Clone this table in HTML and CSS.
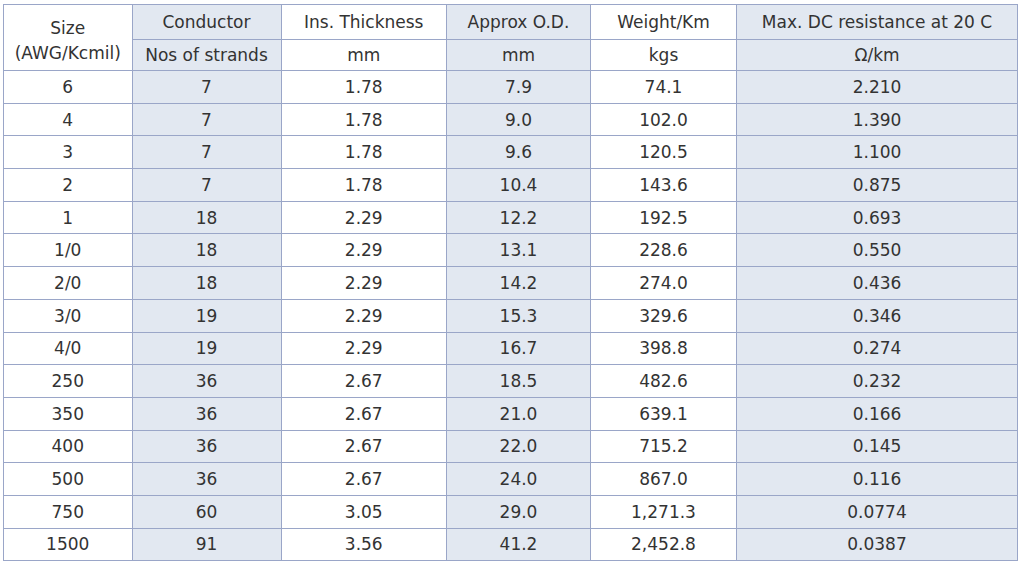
FILE: index.html
```html
<!DOCTYPE html>
<html>
<head>
<meta charset="utf-8">
<link rel="stylesheet" href="styles.css">
</head>
<body>
<table class="spec">
  <colgroup>
    <col class="c1"><col class="c2"><col class="c3"><col class="c4"><col class="c5"><col class="c6">
  </colgroup>
  <thead>
    <tr class="h1">
      <th rowspan="2" class="size">Size<br>(AWG/Kcmil)</th>
      <th class="alt">Conductor</th>
      <th>Ins. Thickness</th>
      <th class="alt">Approx O.D.</th>
      <th>Weight/Km</th>
      <th class="alt">Max. DC resistance at 20 C</th>
    </tr>
    <tr class="h2">
      <th class="alt">Nos of strands</th>
      <th>mm</th>
      <th class="alt">mm</th>
      <th>kgs</th>
      <th class="alt">Ω/km</th>
    </tr>
  </thead>
  <tbody>
    <tr><td>6</td><td class="alt">7</td><td>1.78</td><td class="alt">7.9</td><td>74.1</td><td class="alt">2.210</td></tr>
    <tr><td>4</td><td class="alt">7</td><td>1.78</td><td class="alt">9.0</td><td>102.0</td><td class="alt">1.390</td></tr>
    <tr><td>3</td><td class="alt">7</td><td>1.78</td><td class="alt">9.6</td><td>120.5</td><td class="alt">1.100</td></tr>
    <tr><td>2</td><td class="alt">7</td><td>1.78</td><td class="alt">10.4</td><td>143.6</td><td class="alt">0.875</td></tr>
    <tr><td>1</td><td class="alt">18</td><td>2.29</td><td class="alt">12.2</td><td>192.5</td><td class="alt">0.693</td></tr>
    <tr><td>1/0</td><td class="alt">18</td><td>2.29</td><td class="alt">13.1</td><td>228.6</td><td class="alt">0.550</td></tr>
    <tr><td>2/0</td><td class="alt">18</td><td>2.29</td><td class="alt">14.2</td><td>274.0</td><td class="alt">0.436</td></tr>
    <tr><td>3/0</td><td class="alt">19</td><td>2.29</td><td class="alt">15.3</td><td>329.6</td><td class="alt">0.346</td></tr>
    <tr><td>4/0</td><td class="alt">19</td><td>2.29</td><td class="alt">16.7</td><td>398.8</td><td class="alt">0.274</td></tr>
    <tr><td>250</td><td class="alt">36</td><td>2.67</td><td class="alt">18.5</td><td>482.6</td><td class="alt">0.232</td></tr>
    <tr><td>350</td><td class="alt">36</td><td>2.67</td><td class="alt">21.0</td><td>639.1</td><td class="alt">0.166</td></tr>
    <tr><td>400</td><td class="alt">36</td><td>2.67</td><td class="alt">22.0</td><td>715.2</td><td class="alt">0.145</td></tr>
    <tr><td>500</td><td class="alt">36</td><td>2.67</td><td class="alt">24.0</td><td>867.0</td><td class="alt">0.116</td></tr>
    <tr><td>750</td><td class="alt">60</td><td>3.05</td><td class="alt">29.0</td><td>1,271.3</td><td class="alt">0.0774</td></tr>
    <tr><td>1500</td><td class="alt">91</td><td>3.56</td><td class="alt">41.2</td><td>2,452.8</td><td class="alt">0.0387</td></tr>
  </tbody>
</table>
</body>
</html>
```

FILE: styles.css
```css
html, body {
  margin: 0;
  background: #ffffff;
}
body {
  padding: 4px 0 0 3px;
  font-family: "DejaVu Sans", sans-serif;
  color: #333333;
}
.spec {
  border-collapse: collapse;
  table-layout: fixed;
  width: 1014px;
  font-size: 17px;
}
.c1 { width: 128.5px; }
.c2 { width: 149px; }
.c3 { width: 165.5px; }
.c4 { width: 144px; }
.c5 { width: 146px; }
.c6 { width: 281px; }
.spec th, .spec td {
  border: 1px solid #9aa6c8;
  padding: 0;
  text-align: center;
  vertical-align: middle;
  font-weight: normal;
  line-height: 20px;
}
.spec .alt { background: #e2e8f1; }
.h1 th { height: 34px; }
.h2 th { height: 30px; }
.spec tbody td { height: 31.7px; }
.spec .size {
  line-height: 25px;
  padding-top: 7px;
  box-sizing: border-box;
}
```
